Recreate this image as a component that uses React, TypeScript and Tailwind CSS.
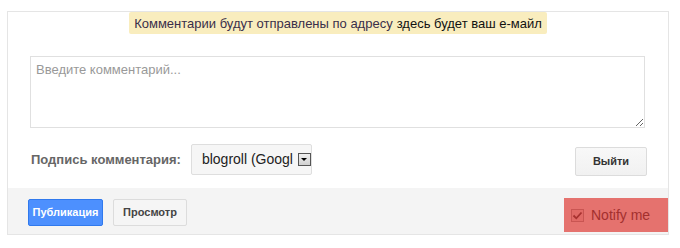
import React from "react";

export default function App() {
  return (
    <div className="w-[680px] h-[248px] bg-white pt-[11px] pl-[7px]" style={{ fontFamily: '"Liberation Sans", Arial, sans-serif' }}>
      <div className="w-[662px] h-[224px] border border-[#e5e5e5] flex flex-col">
        <div className="flex justify-center">
          <div className="h-[22px] px-[5px] bg-[#f9edbe] rounded-[2px] flex items-center text-[13px] leading-none">
            <span className="text-[#3a2f4a]">Комментарии будут отправлены по адресу</span>
            <span className="text-[#111] ml-[4px]">здесь будет ваш e-майл</span>
          </div>
        </div>
        <div className="pl-[22px] pt-[22px]">
          <textarea
            placeholder="Введите комментарий..."
            className="block w-[615px] h-[72px] border border-[#e0e0e0] px-[5px] py-[5px] text-[13px] leading-[16px] text-[#333] placeholder:text-[#999] outline-none"
            style={{ fontFamily: '"Liberation Sans", Arial, sans-serif' }}
          />
        </div>
        <div className="flex items-start pl-[23px] pr-[21px] pt-[16px] h-[60px]">
          <div className="flex items-center h-[31px]">
            <span className="text-[13px] font-bold text-[#666]">Подпись комментария:</span>
            <div className="ml-[10px] w-[121px] h-[31px] border border-[#dedede] rounded-[2px] bg-[#f6f6f6] flex items-center pl-[10px]">
              <span className="text-[14px] text-[#222] whitespace-nowrap w-[96px]">blogroll (Googl</span>
              <div className="w-[13px] h-[13px] border border-[#555] bg-gradient-to-b from-[#f0f0f0] to-[#d0d0d0] flex items-center justify-center">
                <div className="w-0 h-0 border-l-[3px] border-r-[3px] border-t-[3px] border-l-transparent border-r-transparent border-t-black" />
              </div>
            </div>
          </div>
          <div className="ml-auto mt-[3px] w-[72px] h-[29px] border border-[#dcdcdc] rounded-[2px] bg-gradient-to-b from-[#f8f8f8] to-[#f1f1f1] flex items-center justify-center text-[11px] font-bold text-[#333]">
            Выйти
          </div>
        </div>
        <div className="flex-1 bg-[#f4f4f4] flex items-start pl-[20px]">
          <div className="mt-[11px] w-[75px] h-[27px] rounded-[2px] border border-[#3079ed] bg-[#4d90fe] flex items-center justify-center text-[11px] font-bold text-white">
            Публикация
          </div>
          <div className="mt-[11px] ml-[10px] w-[74px] h-[27px] rounded-[2px] border border-[#dcdcdc] bg-[#f5f5f5] flex items-center justify-center text-[11px] font-bold text-[#444]">
            Просмотр
          </div>
          <div className="ml-auto mt-[10px] w-[104px] h-[34px] bg-[#e5726e] flex items-center pl-[7px]">
            <div className="w-[13px] h-[13px] border border-[#c95552] bg-[#e16a66] flex items-center justify-center">
              <svg width="11" height="11" viewBox="0 0 11 11">
                <path d="M1.5 5.5 L4.3 8.3 L9.5 2.5" stroke="#a83230" strokeWidth="1.8" fill="none" />
              </svg>
            </div>
            <span className="ml-[7px] text-[14px] text-[#a3302e]">Notify me</span>
          </div>
        </div>
      </div>
    </div>
  );
}
